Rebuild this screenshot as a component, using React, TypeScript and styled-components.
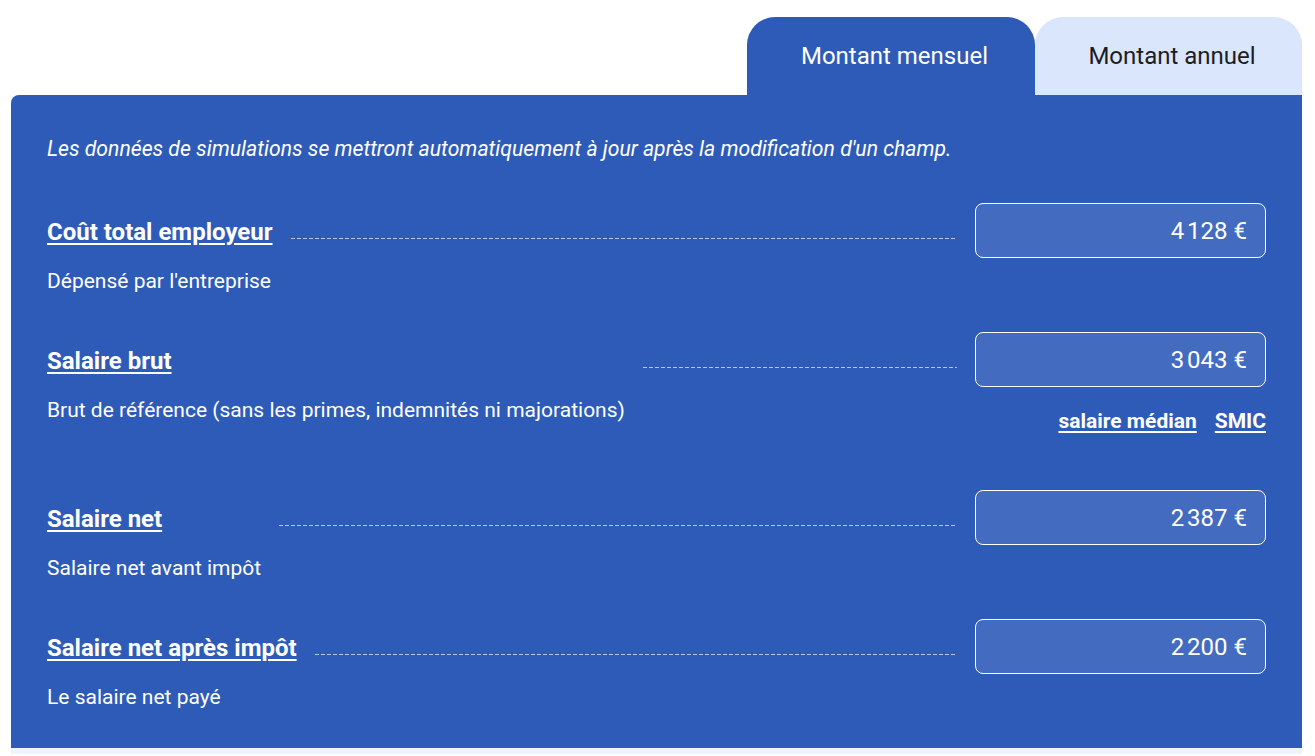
import React from 'react'
import styled, { createGlobalStyle } from 'styled-components'

const GlobalStyle = createGlobalStyle`
  body {
    margin: 0;
    background: #fff;
    font-family: Roboto, 'Noto Sans', sans-serif;
  }
`

interface Field {
  title: string
  description: string
  value: string
  links?: string[]
}

const fields: Field[] = [
  { title: 'Coût total employeur', description: "Dépensé par l'entreprise", value: '4\u202f128 €' },
  {
    title: 'Salaire brut',
    description: 'Brut de référence (sans les primes, indemnités ni majorations)',
    value: '3\u202f043 €',
    links: ['salaire médian', 'SMIC'],
  },
  { title: 'Salaire net', description: 'Salaire net avant impôt', value: '2\u202f387 €' },
  { title: 'Salaire net après impôt', description: 'Le salaire net payé', value: '2\u202f200 €' },
]

const App = () => (
  <Page>
    <GlobalStyle />
    <Tabs>
      <Tab active>Montant mensuel</Tab>
      <Tab>Montant annuel</Tab>
    </Tabs>
    <Panel>
      <Notice>
        Les données de simulations se mettront automatiquement à jour après la modification d'un champ.
      </Notice>
      <Fields>
        {fields.map(field => (
          <Row key={field.title}>
            <LabelBlock>
              <Title href="#">{field.title}</Title>
              <Description>{field.description}</Description>
            </LabelBlock>
            <Dots />
            <InputBlock>
              <ValueInput>{field.value}</ValueInput>
              {field.links && (
                <Links>
                  {field.links.map(l => (
                    <QuickLink key={l} href="#">
                      {l}
                    </QuickLink>
                  ))}
                </Links>
              )}
            </InputBlock>
          </Row>
        ))}
      </Fields>
    </Panel>
    <Strip />
  </Page>
)

export default App

const Page = styled.div`
  padding: 17px 13px 0 11px;
`

const Tabs = styled.div`
  display: flex;
  justify-content: flex-end;
`

const Tab = styled.div<{ active?: boolean }>`
  height: 78px;
  box-sizing: border-box;
  padding-left: 7px;
  display: flex;
  align-items: center;
  justify-content: center;
  border-radius: 28px 28px 0 0;
  font-size: 24px;
  background: ${p => (p.active ? '#2e5bb8' : '#dae6fc')};
  color: ${p => (p.active ? '#fff' : '#1d1d1f')};
  width: ${p => (p.active ? '288px' : '267px')};
`

const Panel = styled.div`
  background: #2e5bb8;
  border-radius: 8px 0 0 0;
  padding: 42px 36px 39px;
  color: #fff;
`

const Notice = styled.p`
  margin: 0;
  font-style: italic;
  font-size: 21.2px;
  line-height: 24px;
`

const Fields = styled.div`
  display: flex;
  flex-direction: column;
  gap: 39px;
  margin-top: 42px;
`

const Row = styled.div`
  display: flex;
  align-items: flex-start;
`

const LabelBlock = styled.div`
  display: flex;
  flex-direction: column;
  align-items: flex-start;
`

const Title = styled.a`
  color: #fff;
  font-weight: 700;
  font-size: 24px;
  line-height: 55px;
  padding-top: 2px;
  text-decoration: underline;
  text-underline-offset: 3px;
  text-decoration-thickness: 2px;
`

const Description = styled.div`
  font-size: 21px;
  line-height: 24px;
  margin-top: 9px;
`

const Dots = styled.div`
  flex: 1;
  height: 1px;
  margin: 35px 18px 0;
  background: repeating-linear-gradient(
    to right,
    rgba(255, 255, 255, 0.65) 0 4px,
    transparent 4px 6px
  );
`

const InputBlock = styled.div`
  width: 291px;
  display: flex;
  flex-direction: column;
  align-items: flex-end;
`

const ValueInput = styled.div`
  box-sizing: border-box;
  width: 100%;
  height: 55px;
  border: 1px solid #fff;
  border-radius: 8px;
  background: rgba(255, 255, 255, 0.1);
  padding: 0 18px;
  display: flex;
  align-items: center;
  justify-content: flex-end;
  font-size: 24px;
`

const Links = styled.div`
  display: flex;
  gap: 18px;
  margin-top: 22px;
  margin-bottom: 18px;
`

const QuickLink = styled.a`
  color: #fff;
  font-weight: 700;
  font-size: 21px;
  line-height: 24px;
  text-decoration: underline;
  text-underline-offset: 3px;
  text-decoration-thickness: 2px;
`

const Strip = styled.div`
  height: 6px;
  background: #eff3fd;
`
